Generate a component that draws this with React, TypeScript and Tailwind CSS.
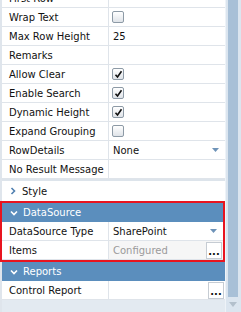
// App.tsx – property grid panel

type Row = {
  label: string;
  value?: "check" | "empty" | "text" | "select" | "dialog";
  checked?: boolean;
  text?: string;
  muted?: boolean;
};

const gridRows: Row[] = [
  { label: "First Row" },
  { label: "Wrap Text", value: "check", checked: false },
  { label: "Max Row Height", value: "text", text: "25" },
  { label: "Remarks" },
  { label: "Allow Clear", value: "check", checked: true },
  { label: "Enable Search", value: "check", checked: true },
  { label: "Dynamic Height", value: "check", checked: true },
  { label: "Expand Grouping", value: "check", checked: false },
  { label: "RowDetails", value: "select", text: "None" },
  { label: "No Result Message" },
];

const Checkbox = ({ checked }: { checked?: boolean }) => (
  <div className="w-[12px] h-[12px] rounded-[2px] border border-[#8d9aa6] bg-gradient-to-b from-white to-[#dfe3e8] flex items-center justify-center">
    {checked && (
      <svg width="9" height="9" viewBox="0 0 9 9">
        <path d="M1.5 4.8 L3.5 7 L7.5 1.2" fill="none" stroke="#111" strokeWidth="1.6" />
      </svg>
    )}
  </div>
);

const DropArrow = () => (
  <svg width="7" height="4" viewBox="0 0 7 4" className="ml-auto mr-[6px]">
    <path d="M0 0 H7 L3.5 4 Z" fill="#6e93b8" />
  </svg>
);

const DotsButton = () => (
  <div className="ml-auto mr-[1px] w-[16px] h-[17px] bg-white border border-[#c6ccd3] flex items-end justify-center pb-[1px]">
    <span className="font-bold text-[10px] leading-[10px] text-[#111]">...</span>
  </div>
);

const PropRow = ({ row }: { row: Row }) => (
  <div className="flex h-[19px] border-b border-[#dfe4ea] bg-white">
    <div className="w-[107px] shrink-0 pl-[7px] flex items-center border-r border-[#dfe4ea] text-[#111] whitespace-nowrap overflow-hidden">
      {row.label}
    </div>
    <div
      className={`flex-1 flex items-center pl-[3px] ${row.muted ? "bg-[#f6f6f6]" : ""}`}
    >
      {row.value === "check" && <Checkbox checked={row.checked} />}
      {row.value === "text" && <span className="pl-[1px] text-[#111]">{row.text}</span>}
      {row.value === "select" && (
        <>
          <span className="pl-[1px] text-[#111]">{row.text}</span>
          <DropArrow />
        </>
      )}
      {row.value === "dialog" && (
        <>
          <span className={`pl-[1px] ${row.muted ? "text-[#9a9a9a]" : "text-[#111]"}`}>{row.text}</span>
          <DotsButton />
        </>
      )}
    </div>
  </div>
);

const GroupHeader = ({ title }: { title: string }) => (
  <div className="h-[19px] bg-[#5b8ebd] flex items-center pl-[8px] text-white">
    <svg width="8" height="6" viewBox="0 0 8 6" className="mr-[5px]">
      <path d="M1 1.5 L4 4.5 L7 1.5" fill="none" stroke="#fff" strokeWidth="1.6" />
    </svg>
    {title}
  </div>
);

export default function App() {
  return (
    <div className="w-[241px] h-[312px] flex overflow-hidden bg-[#e3eaf1] font-['DejaVu_Sans',sans-serif] text-[10px]">
      {/* grid */}
      <div className="w-[225px] shrink-0 flex flex-col border-l-2 border-[#dfe5ec]">
        <div className="mt-[-11px]">
          {gridRows.map((r) => (
            <PropRow key={r.label} row={r} />
          ))}
        </div>

        {/* Style group (collapsed) */}
        <div className="h-[22px] border-t-2 border-[#dde4eb] bg-white flex items-center pl-[8px] text-[#111]">
          <svg width="6" height="8" viewBox="0 0 6 8" className="mr-[6px]">
            <path d="M1.5 1 L4.5 4 L1.5 7" fill="none" stroke="#4f7fb0" strokeWidth="1.6" />
          </svg>
          Style
        </div>

        {/* DataSource group, highlighted */}
        <div className="ml-[-2px] border-2 border-[#e8141f]">
          <GroupHeader title="DataSource" />
          <PropRow row={{ label: "DataSource Type", value: "select", text: "SharePoint" }} />
          <PropRow row={{ label: "Items", value: "dialog", text: "Configured", muted: true }} />
        </div>

        <GroupHeader title="Reports" />
        <PropRow row={{ label: "Control Report", value: "dialog", text: "" }} />
      </div>

      {/* scrollbar */}
      <div className="flex-1 flex flex-col bg-[#dbe5ef] border-l border-[#eef3f8] pl-[2px] pr-[3px]">
        <div className="h-[297px] bg-[#a8c0d7]" />
        <div className="flex-1 flex items-center justify-center">
          <svg width="8" height="5" viewBox="0 0 8 5">
            <path d="M0 0 H8 L4 5 Z" fill="#b3c0cc" />
          </svg>
        </div>
      </div>
    </div>
  );
}
